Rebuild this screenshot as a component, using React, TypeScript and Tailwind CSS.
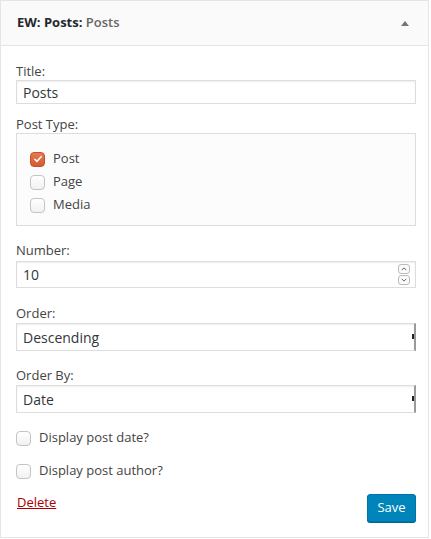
import React from "react";

const font = { fontFamily: '"Open Sans", "Noto Sans", sans-serif' };

function Box({ checked = false }: { checked?: boolean }) {
  if (checked) {
    return (
      <span className="flex h-[15px] w-[15px] shrink-0 items-center justify-center rounded-[4px] border border-[#c2502a] bg-gradient-to-b from-[#e77a4f] to-[#d45a31]">
        <svg viewBox="0 0 12 12" className="h-[10px] w-[10px]">
          <path d="M2.2 6.3 L4.8 8.8 L9.8 3.2" fill="none" stroke="#fff" strokeWidth="1.9" strokeLinecap="round" strokeLinejoin="round" />
        </svg>
      </span>
    );
  }
  return <span className="h-[15px] w-[15px] shrink-0 rounded-[4px] border border-[#c4c4c4] bg-gradient-to-b from-[#ffffff] to-[#f1f1f1]" />;
}

function Label({ children, className = "" }: { children: React.ReactNode; className?: string }) {
  return <div className={`text-[13px] leading-[16px] text-[#444] ${className}`}>{children}</div>;
}

function Select({ value }: { value: string }) {
  return (
    <div className="relative flex h-[28px] items-center border border-[#ddd] border-r-[2px] border-r-[#9a9a9a] bg-white pl-[6px] text-[14px] text-[#32373c] shadow-[inset_0_1px_2px_rgba(0,0,0,0.07)]">
      {value}
      <span className="absolute right-[0px] top-[10px] h-[5px] w-[2px] bg-[#222]" />
    </div>
  );
}

export default function App() {
  return (
    <div className="h-[539px] w-[431px] bg-white" style={font}>
      <div className="h-[538px] w-[429px] border border-[#e5e5e5] bg-white">
        <div className="flex h-[45px] items-center justify-between border-b border-[#e5e5e5] bg-[#fafafa] pl-[16px] pr-[19px] text-[13px]">
          <div>
            <span className="font-bold text-[#23282d]">EW: Posts:</span>{" "}
            <span className="font-semibold text-[#666]">Posts</span>
          </div>
          <svg viewBox="0 0 8 5" className="h-[5px] w-[8px]">
            <path d="M4 0 L8 5 L0 5 Z" fill="#72777c" />
          </svg>
        </div>

        <div className="pl-[15px] pr-[12px] pt-[17px]">
          <Label>Title:</Label>
          <input
            readOnly
            value="Posts"
            className="mt-[1px] block h-[24px] w-full border border-[#ddd] bg-white px-[6px] text-[14px] text-[#32373c] shadow-[inset_0_1px_2px_rgba(0,0,0,0.07)] outline-none"
          />

          <Label className="mt-[12px]">Post Type:</Label>
          <div className="mt-[1px] flex h-[93px] flex-col gap-[7px] border border-[#ddd] bg-[#fcfcfc] pl-[13px] pt-[17px]">
            {[
              ["Post", true],
              ["Page", false],
              ["Media", false],
            ].map(([name, on]) => (
              <div key={name as string} className="flex h-[16px] items-center gap-[8px] text-[13px] text-[#444]">
                <Box checked={on as boolean} />
                <span>{name as string}</span>
              </div>
            ))}
          </div>

          <Label className="mt-[16px]">Number:</Label>
          <div className="relative mt-[3px] flex h-[27px] items-center border border-[#ddd] bg-white pl-[6px] text-[14px] text-[#32373c] shadow-[inset_0_1px_2px_rgba(0,0,0,0.07)]">
            10
            <div className="absolute right-[5px] top-[2px] flex flex-col gap-[1px]">
              <span className="flex h-[10px] w-[12px] items-center justify-center rounded-[3px] border border-[#bbb] bg-[#fafafa]">
                <svg viewBox="0 0 8 5" className="h-[4px] w-[6px]">
                  <path d="M1 4 L4 1 L7 4" fill="none" stroke="#555" strokeWidth="1.2" />
                </svg>
              </span>
              <span className="flex h-[10px] w-[12px] items-center justify-center rounded-[3px] border border-[#bbb] bg-[#fafafa]">
                <svg viewBox="0 0 8 5" className="h-[4px] w-[6px]">
                  <path d="M1 1 L4 4 L7 1" fill="none" stroke="#555" strokeWidth="1.2" />
                </svg>
              </span>
            </div>
          </div>

          <Label className="mt-[17px]">Order:</Label>
          <div className="mt-[2px]">
            <Select value="Descending" />
          </div>

          <Label className="mt-[16px]">Order By:</Label>
          <div className="mt-[2px]">
            <Select value="Date" />
          </div>

          <div className="mt-[17px] flex h-[16px] items-center gap-[8px] text-[13px] text-[#444]">
            <Box />
            <span>Display post date?</span>
          </div>
          <div className="mt-[17px] flex h-[16px] items-center gap-[8px] text-[13px] text-[#444]">
            <Box />
            <span>Display post author?</span>
          </div>

          <div className="mt-[15px] flex items-start justify-between">
            <a href="#" className="ml-[1px] mt-[0px] text-[13px] leading-[16px] text-[#a00] underline">
              Delete
            </a>
            <button className="h-[28px] w-[49px] rounded-[3px] border border-[#0073aa] bg-[#0085ba] text-[13px] text-white shadow-[0_1px_0_#006799]">
              Save
            </button>
          </div>
        </div>
      </div>
    </div>
  );
}
